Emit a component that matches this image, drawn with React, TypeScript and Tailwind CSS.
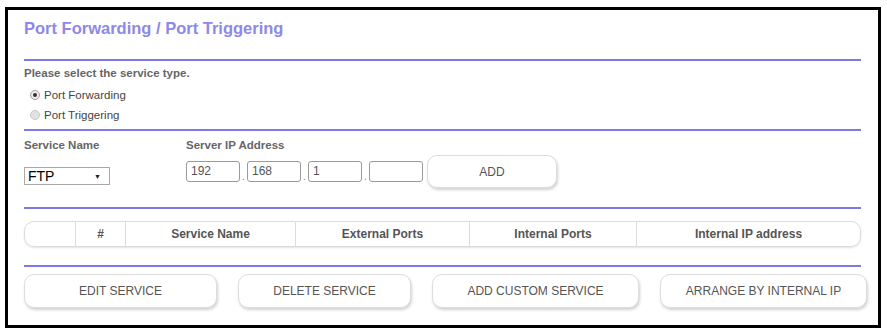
import React from 'react';

const Radio = ({ checked, label }: { checked?: boolean; label: string }) => (
  <label className="flex items-center h-[20px] pl-[6px] gap-[4px] text-[11.5px] text-[#444]">
    <span
      className={`w-[10px] h-[10px] rounded-full border flex items-center justify-center ${
        checked ? 'border-[#a0a0a0] bg-[#ececec]' : 'border-[#c8c8c8] bg-[#e2e2e2]'
      }`}
    >
      {checked && <span className="w-[4px] h-[4px] rounded-full bg-[#333]" />}
    </span>
    <span className="leading-[20px]">{label}</span>
  </label>
);

const Divider = ({ className = '' }: { className?: string }) => (
  <div className={`h-[2px] bg-[#7c78e4] ${className}`} />
);

const IpBox = ({ value }: { value: string }) => (
  <div className="w-[54px] h-[21px] border border-[#9a9a9a] rounded-[3px] px-[4px] text-[12px] leading-[19px] text-[#555]">
    {value}
  </div>
);

const Dot = () => (
  <span className="w-[7px] text-center text-[10px] leading-none text-[#888] self-end pb-[6px]">.</span>
);

const columns = [
  { label: '', w: 'w-[51px]' },
  { label: '#', w: 'w-[50px]' },
  { label: 'Service Name', w: 'w-[170px]' },
  { label: 'External Ports', w: 'w-[174px]' },
  { label: 'Internal Ports', w: 'w-[167px]' },
  { label: 'Internal IP address', w: 'flex-1' },
];

const buttons = [
  { label: 'EDIT SERVICE', w: 'w-[193px]' },
  { label: 'DELETE SERVICE', w: 'w-[173px]' },
  { label: 'ADD CUSTOM SERVICE', w: 'w-[207px]' },
  { label: 'ARRANGE BY INTERNAL IP', w: 'w-[207px]' },
];

export default function App() {
  return (
    <div className="w-[887px] h-[332px] bg-white pt-[7px] pl-[5px] font-['Liberation_Sans',Arial,sans-serif]">
      <div className="w-[876px] h-[321px] border-[3px] border-black bg-white pl-[16px] pr-[17px] flex flex-col">
        {/* Title */}
        <h1 className="mt-[8px] text-[16.5px] leading-[20px] font-bold text-[#8d89e8]">
          Port Forwarding / Port Triggering
        </h1>
        <Divider className="mt-[21px]" />

        {/* Service type */}
        <p className="mt-[4px] text-[11.5px] leading-[16px] font-bold text-[#666]">
          Please select the service type.
        </p>
        <div className="mt-[4px] flex flex-col">
          <Radio checked label="Port Forwarding" />
          <Radio label="Port Triggering" />
        </div>
        <Divider className="mt-[4px]" />

        {/* Service / IP row */}
        <div className="mt-[6px] flex items-start">
          <div className="w-[162px] flex flex-col">
            <span className="text-[11.5px] leading-[16px] font-bold text-[#666]">Service Name</span>
            <div className="mt-[14px] w-[86px] h-[18px] border border-[#aaa] bg-white flex items-center justify-between pl-[3px] pr-[8px]">
              <span className="text-[14px] leading-none text-black">FTP</span>
              <span className="text-[7px] leading-none text-[#222]">▼</span>
            </div>
          </div>
          <div className="flex flex-col">
            <span className="text-[11.5px] leading-[16px] font-bold text-[#666]">Server IP Address</span>
            <div className="mt-[2px] flex items-center h-[33px]">
              <IpBox value="192" />
              <Dot />
              <IpBox value="168" />
              <Dot />
              <IpBox value="1" />
              <Dot />
              <IpBox value="" />
              <button className="ml-[4px] w-[130px] h-[33px] rounded-[10px] border border-[#ddd] bg-white shadow-[1px_2px_3px_rgba(0,0,0,0.18)] text-[12px] text-[#555]">
                ADD
              </button>
            </div>
          </div>
        </div>
        <Divider className="mt-[19px]" />

        {/* Table header */}
        <div className="mt-[12px] h-[26px] flex rounded-[10px] border border-[#dcdcdc] shadow-[0_1px_2px_rgba(0,0,0,0.12)] overflow-hidden">
          {columns.map((c, i) => (
            <div
              key={i}
              className={`${c.w} flex items-center justify-center text-[12px] font-bold text-[#555] ${
                i < columns.length - 1 ? 'border-r border-[#dcdcdc]' : ''
              }`}
            >
              {c.label}
            </div>
          ))}
        </div>
        <Divider className="mt-[18px]" />

        {/* Action buttons */}
        <div className="mt-[7px] flex gap-[21px]">
          {buttons.map((b) => (
            <button
              key={b.label}
              className={`${b.w} h-[34px] shrink-0 rounded-[10px] border border-[#ddd] bg-white shadow-[1px_2px_3px_rgba(0,0,0,0.18)] text-[12px] text-[#555]`}
            >
              {b.label}
            </button>
          ))}
        </div>
      </div>
    </div>
  );
}
